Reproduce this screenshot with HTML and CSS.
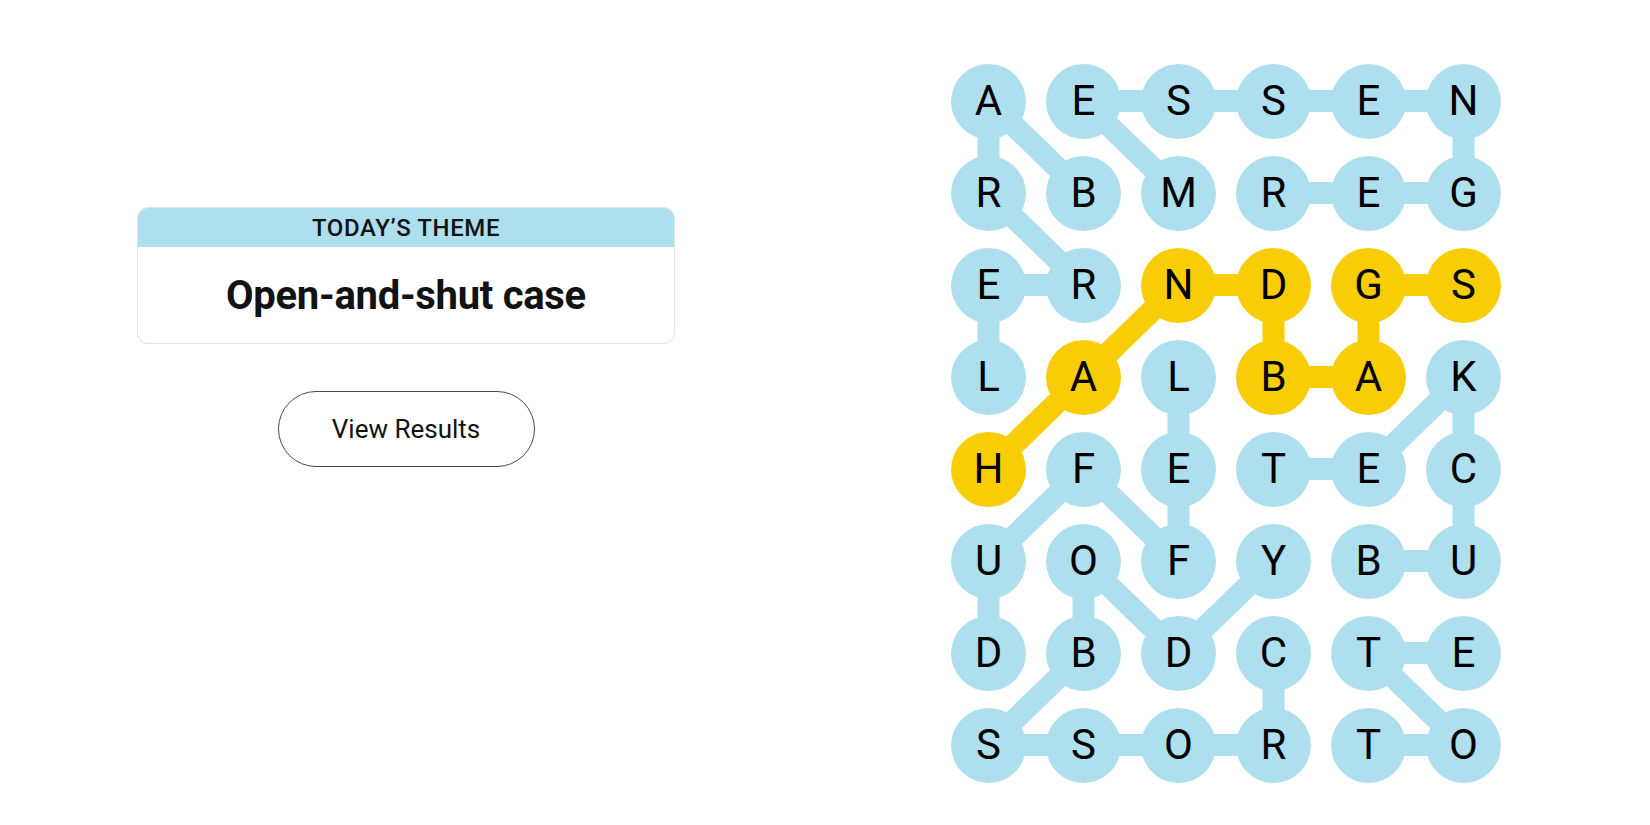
FILE: index.html
```html
<!DOCTYPE html>
<html lang="en">
<head>
<meta charset="utf-8">
<title>Strands</title>
<link rel="stylesheet" href="styles.css">
</head>
<body>
<main class="page">
  <section class="side">
    <div class="theme-card">
      <div class="theme-head">TODAY’S THEME</div>
      <div class="theme-body"><h1 class="theme-title">Open-and-shut case</h1></div>
    </div>
    <button class="results-btn" type="button">View Results</button>
  </section>

  <section class="board">
    <svg class="links" viewBox="0 0 570 736" width="570" height="736" aria-hidden="true">
      <g class="blue">
        <polyline points="237.5,138 142.5,46 522.5,46 522.5,138 332.5,138"/>
        <polyline points="142.5,138 47.5,46 47.5,138 142.5,230 47.5,230 47.5,322"/>
        <polyline points="47.5,598 47.5,506 142.5,414 237.5,506 237.5,414 237.5,322"/>
        <polyline points="427.5,506 522.5,506 522.5,322 427.5,414 332.5,414"/>
        <polyline points="332.5,598 332.5,690 47.5,690 142.5,598 142.5,506 237.5,598 332.5,506"/>
        <polyline points="427.5,690 522.5,690 427.5,598 522.5,598"/>
      </g>
      <g class="gold">
        <polyline points="47.5,414 142.5,322 237.5,230 332.5,230 332.5,322 427.5,322 427.5,230 522.5,230"/>
      </g>
    </svg>
    <div class="grid">
      <span class="dot">A</span><span class="dot">E</span><span class="dot">S</span><span class="dot">S</span><span class="dot">E</span><span class="dot">N</span>
      <span class="dot">R</span><span class="dot">B</span><span class="dot">M</span><span class="dot">R</span><span class="dot">E</span><span class="dot">G</span>
      <span class="dot">E</span><span class="dot">R</span><span class="dot span">N</span><span class="dot span">D</span><span class="dot span">G</span><span class="dot span">S</span>
      <span class="dot">L</span><span class="dot span">A</span><span class="dot">L</span><span class="dot span">B</span><span class="dot span">A</span><span class="dot">K</span>
      <span class="dot span">H</span><span class="dot">F</span><span class="dot">E</span><span class="dot">T</span><span class="dot">E</span><span class="dot">C</span>
      <span class="dot">U</span><span class="dot">O</span><span class="dot">F</span><span class="dot">Y</span><span class="dot">B</span><span class="dot">U</span>
      <span class="dot">D</span><span class="dot">B</span><span class="dot">D</span><span class="dot">C</span><span class="dot">T</span><span class="dot">E</span>
      <span class="dot">S</span><span class="dot">S</span><span class="dot">O</span><span class="dot">R</span><span class="dot">T</span><span class="dot">O</span>
    </div>
  </section>
</main>
</body>
</html>
```

FILE: styles.css
```css
* { box-sizing: border-box; }

html, body {
  margin: 0;
  padding: 0;
  background: #ffffff;
}

body {
  font-family: Roboto, "Liberation Sans", Arial, sans-serif;
  color: #121212;
}

.page {
  display: flex;
  justify-content: space-between;
  align-items: flex-start;
  padding: 55px 139px 0 137px;
  height: 825px;
  overflow: hidden;
}

.side {
  width: 538px;
  display: flex;
  flex-direction: column;
  align-items: center;
  padding-top: 152px;
}

.theme-card {
  width: 100%;
  border: 1px solid #e2e2e2;
  border-radius: 11px;
  overflow: hidden;
  background: #fff;
}

.theme-head {
  height: 39px;
  background: #aedfee;
  display: flex;
  align-items: center;
  justify-content: center;
  font-size: 24px;
  font-weight: 500;
  letter-spacing: 0.6px;
  color: #121212;
}

.theme-body {
  height: 96px;
  display: flex;
  align-items: center;
  justify-content: center;
}

.theme-title {
  margin: 0;
  font-size: 40px;
  font-weight: 700;
  letter-spacing: -0.3px;
  color: #121212;
}

.results-btn {
  margin-top: 47px;
  width: 257px;
  height: 76px;
  border: 1px solid #4a4a4a;
  border-radius: 38px;
  background: #fff;
  font-family: Roboto, "Liberation Sans", Arial, sans-serif;
  font-size: 26px;
  font-weight: 400;
  color: #121212;
  padding: 0;
  cursor: pointer;
}

.board {
  position: relative;
  width: 570px;
  height: 736px;
}

.links {
  position: absolute;
  left: 0;
  top: 0;
}

.links polyline {
  fill: none;
  stroke-width: 22;
  stroke-linejoin: round;
  stroke-linecap: round;
}

.links .blue polyline { stroke: #aedfee; }
.links .gold polyline { stroke: #f8cd05; }

.grid {
  position: relative;
  display: grid;
  grid-template-columns: repeat(6, 95px);
  grid-auto-rows: 92px;
  place-items: center;
}

.dot {
  width: 75px;
  height: 75px;
  border-radius: 50%;
  background: #aedfee;
  display: flex;
  align-items: center;
  justify-content: center;
  font-size: 42px;
  font-weight: 400;
  color: #000;
  padding-bottom: 2px;
}

.dot.span { background: #f8cd05; }
```
